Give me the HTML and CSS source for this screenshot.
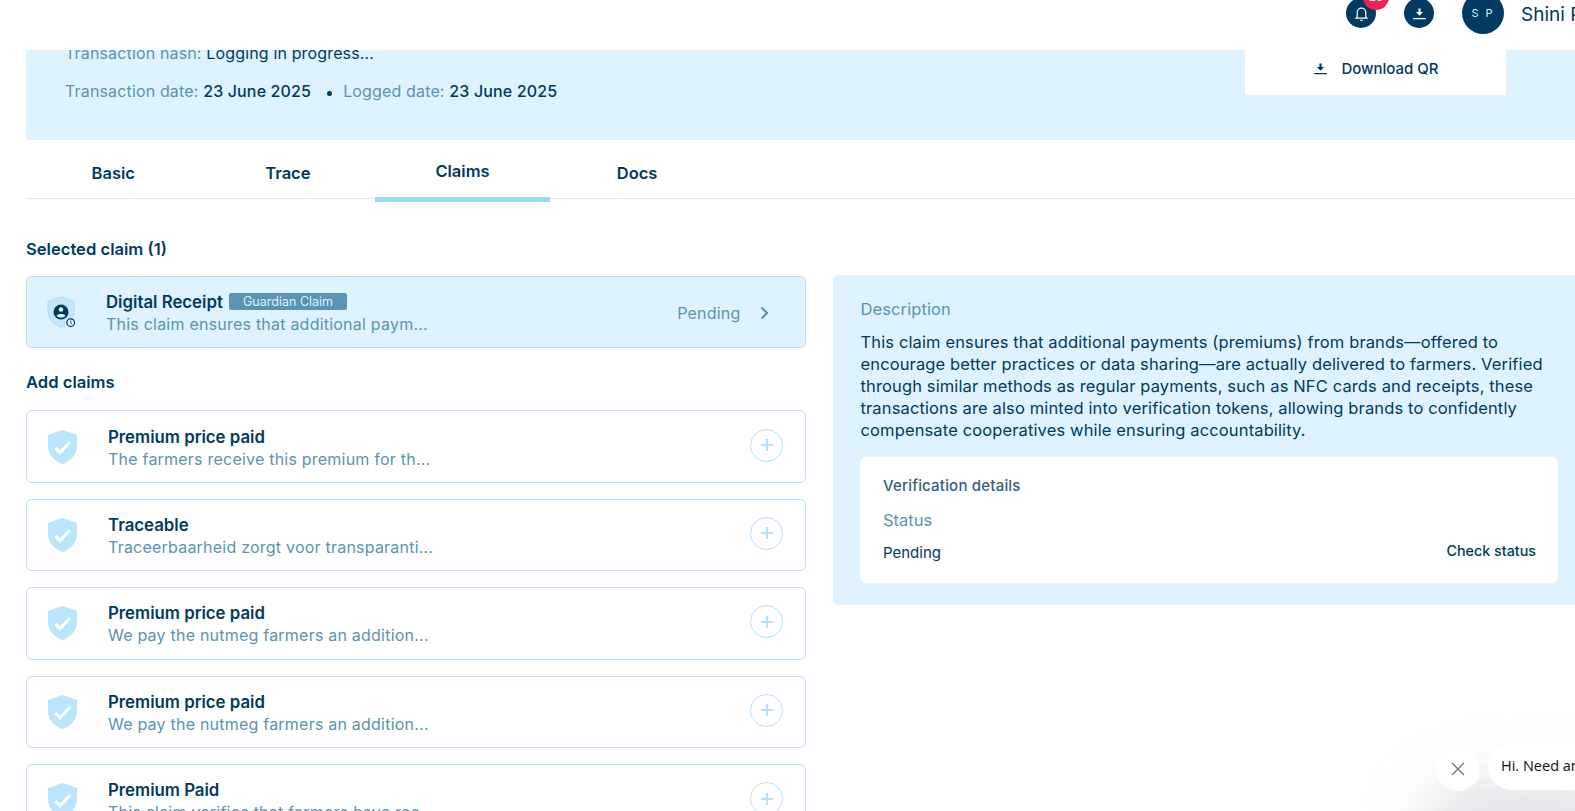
FILE: index.html
```html
<!DOCTYPE html>
<html lang="en">
  <head>
    <meta charset="UTF-8" />
    <meta name="viewport" content="width=device-width, initial-scale=1.0" />
    <title>Claims</title>
    <link rel="stylesheet" href="styles.css">
  </head>
  <body>
    <header class="topbar">
      <div class="round-btn">
        <svg viewBox="0 0 24 24" width="17" height="17" fill="none" stroke="#fff" stroke-width="1.700"><path d="M6 17V10.500a6 6 0 0 1 12 0V17l1.500 1.500h-15zM10 21.500h4"/></svg>
        <span class="badge">25</span>
      </div>
      <div class="round-btn">
        <svg viewBox="0 0 24 24" width="17" height="17" fill="#fff"><path d="M10.500 5h3v5H17l-5 5-5-5h3.500zM3 18.500h18V20H3z"/></svg>
      </div>
      <div class="avatar">S P</div>
      <div class="username">Shini Peters</div>
    </header>

    <main>
      <section class="summary">
        <div class="summary-text">
          <p><span class="muted">Transaction hash:</span> Logging in progress...</p>
          <p><span class="muted">Transaction date:</span> <b>23 June 2025</b><i class="dot"></i><span class="muted">Logged date:</span> <b>23 June 2025</b></p>
        </div>
        <div class="qr-box">
          <svg viewBox="0 0 24 24" width="17" height="17" fill="#003a61"><path d="M10.500 5h3v5H17l-5 5-5-5h3.500zM3 18.500h18V20H3z"/></svg>
          Download QR
        </div>
      </section>

      <nav class="tabs">
        <div class="tab">Basic</div>
        <div class="tab">Trace</div>
        <div class="tab active">Claims</div>
        <div class="tab">Docs</div>
      </nav>

      <h3 class="selected-title">Selected claim (1)</h3>

      <div class="columns">
        <div class="claims">
          <div class="claim selected">
            <svg class="shield" viewBox="0 0 34 36" width="34" height="36">
              <path d="M16 3l13 4.500v10c0 7.500-5.500 12.500-13 15.500C8.500 30 3 25 3 17.500v-10z" fill="#c4e7fc" stroke="#a9dcf9"/>
              <circle cx="16" cy="18" r="7.500" fill="#003a61"/>
              <circle cx="16" cy="15.500" r="2.300" fill="#dbf2ff"/>
              <path d="M11.500 22c1-2.600 8-2.600 9 0a7 7 0 0 1-9 0z" fill="#dbf2ff"/>
              <circle cx="25.700" cy="28.700" r="3.800" fill="#def3ff" stroke="#003a61" stroke-width="1.200"/>
              <path d="M25.700 26.500v2.200l1.500 1.200" fill="none" stroke="#003a61" stroke-width=".8"/>
            </svg>
            <div class="claim-text wide">
              <div class="claim-name">Digital Receipt <span class="tag">Guardian Claim</span></div>
              <div class="claim-desc">This claim ensures that additional paym...</div>
            </div>
            <span class="claim-status">Pending</span>
            <svg class="chevron" viewBox="0 0 12 16" width="12" height="16" fill="none" stroke="#5a93b3" stroke-width="2.200"><path d="M3.500 2.500L9 8l-5.500 5.500"/></svg>
          </div>

          <h3 class="add-title">Add claims</h3>

          <div class="claim">
            <svg class="shield" viewBox="0 0 34 36" width="34" height="36"><path d="M17.500 1l14.500 5v11c0 8.500-6 15-14.500 18C9 32 3 25.500 3 17V6z" fill="#bae5fc"/><path d="M10.500 19l4.500 4.500L25 13" fill="none" stroke="#fff" stroke-width="3.200"/></svg>
            <div class="claim-text">
              <div class="claim-name">Premium price paid</div>
              <div class="claim-desc">The farmers receive this premium for th...</div>
            </div>
            <span class="plus"></span>
          </div>
          <div class="claim">
            <svg class="shield" viewBox="0 0 34 36" width="34" height="36"><path d="M17.500 1l14.500 5v11c0 8.500-6 15-14.500 18C9 32 3 25.500 3 17V6z" fill="#bae5fc"/><path d="M10.500 19l4.500 4.500L25 13" fill="none" stroke="#fff" stroke-width="3.200"/></svg>
            <div class="claim-text">
              <div class="claim-name">Traceable</div>
              <div class="claim-desc">Traceerbaarheid zorgt voor transparanti...</div>
            </div>
            <span class="plus"></span>
          </div>
          <div class="claim">
            <svg class="shield" viewBox="0 0 34 36" width="34" height="36"><path d="M17.500 1l14.500 5v11c0 8.500-6 15-14.500 18C9 32 3 25.500 3 17V6z" fill="#bae5fc"/><path d="M10.500 19l4.500 4.500L25 13" fill="none" stroke="#fff" stroke-width="3.200"/></svg>
            <div class="claim-text">
              <div class="claim-name">Premium price paid</div>
              <div class="claim-desc">We pay the nutmeg farmers an addition...</div>
            </div>
            <span class="plus"></span>
          </div>
          <div class="claim">
            <svg class="shield" viewBox="0 0 34 36" width="34" height="36"><path d="M17.500 1l14.500 5v11c0 8.500-6 15-14.500 18C9 32 3 25.500 3 17V6z" fill="#bae5fc"/><path d="M10.500 19l4.500 4.500L25 13" fill="none" stroke="#fff" stroke-width="3.200"/></svg>
            <div class="claim-text">
              <div class="claim-name">Premium price paid</div>
              <div class="claim-desc">We pay the nutmeg farmers an addition...</div>
            </div>
            <span class="plus"></span>
          </div>
          <div class="claim">
            <svg class="shield" viewBox="0 0 34 36" width="34" height="36"><path d="M17.500 1l14.500 5v11c0 8.500-6 15-14.500 18C9 32 3 25.500 3 17V6z" fill="#bae5fc"/><path d="M10.500 19l4.500 4.500L25 13" fill="none" stroke="#fff" stroke-width="3.200"/></svg>
            <div class="claim-text">
              <div class="claim-name">Premium Paid</div>
              <div class="claim-desc">This claim verifies that farmers have rec...</div>
            </div>
            <span class="plus"></span>
          </div>
        </div>

        <aside class="detail">
          <div class="detail-label">Description</div>
          <p class="detail-text">This claim ensures that additional payments (premiums) from brands—offered to encourage better practices or data sharing—are actually delivered to farmers. Verified through similar methods as regular payments, such as NFC cards and receipts, these transactions are also minted into verification tokens, allowing brands to confidently compensate cooperatives while ensuring accountability.</p>
          <div class="verify">
            <div class="verify-title">Verification details</div>
            <div class="verify-label">Status</div>
            <div class="verify-row">
              <span>Pending</span>
              <span class="check">Check status</span>
            </div>
          </div>
        </aside>
      </div>
    </main>

    <div class="chat">
      <div class="chat-close">
        <svg viewBox="0 0 16 16" width="16" height="16" fill="none" stroke="#6b6f73" stroke-width="1.200"><path d="M2 2l12 12M14 2L2 14"/></svg>
      </div>
      <div class="chat-bubble">Hi. Need any help?</div>
    </div>
  </body>
</html>
```

FILE: styles.css
```css
html, body {
  height: 100%;
  overflow: hidden;
}

body {
  margin: 0;
  background: #fff;
  color: #003a61;
  font-family: Inter, "Noto Sans", sans-serif;
  font-size: 16px;
}

p, h3 {
  margin: 0;
}

.topbar {
  position: fixed;
  top: 0;
  left: 0;
  right: 0;
  height: 50px;
  z-index: 5;
  display: flex;
  align-items: flex-start;
  padding-left: 1346px;
  background: #fff;
}

.round-btn {
  position: relative;
  display: flex;
  justify-content: center;
  align-items: center;
  flex: none;
  width: 30px;
  height: 30px;
  margin: -2px 28px 0 0;
  border-radius: 50%;
  background: #003a61;
}

.badge {
  position: absolute;
  top: -14px;
  left: 17px;
  width: 26px;
  height: 26px;
  border-radius: 50%;
  background: #f0224f;
  color: #fff;
  font-size: 12px;
  line-height: 26px;
  text-align: center;
}

.avatar {
  display: flex;
  justify-content: center;
  align-items: center;
  flex: none;
  width: 42px;
  height: 42px;
  margin: -8px 17px 0 0;
  border-radius: 50%;
  background: #003a61;
  color: #dbf2ff;
  font-size: 11px;
  letter-spacing: 2px;
}

.username {
  flex: none;
  font-size: 19px;
  line-height: 29px;
}

.summary {
  display: flex;
  justify-content: space-between;
  height: 140px;
  margin-left: 26px;
  margin-right: -20px;
  padding-left: 39px;
  box-sizing: border-box;
  border-radius: 0 0 0 4px;
  background: #def3ff;
}

.summary-text {
  padding-top: 43px;
  font-size: 16px;
  letter-spacing: .15px;
  line-height: 20px;
}

.summary-text p {
  margin-bottom: 18px;
}

.muted {
  color: #5a93b3;
}

.summary-text b {
  font-weight: 500;
}

.dot {
  display: inline-block;
  width: 5px;
  height: 5px;
  margin: 0 11px 1px 16px;
  border-radius: 50%;
  background: #003a61;
}

.qr-box {
  display: flex;
  justify-content: center;
  align-items: center;
  gap: 12px;
  width: 261px;
  height: 95px;
  margin-right: 89px;
  padding-top: 41px;
  box-sizing: border-box;
  background: #fff;
  font-size: 15px;
  font-weight: 500;
}

.tabs {
  display: flex;
  height: 59px;
  margin-left: 26px;
  box-sizing: border-box;
  border-bottom: 1px solid #e3e9ee;
}

.tab {
  width: 174.600px;
  height: 58px;
  line-height: 66px;
  text-align: center;
  font-size: 16.500px;
  font-weight: 600;
}

.tab.active {
  height: 62px;
  line-height: 62px;
  box-sizing: border-box;
  border-bottom: 5px solid #92dcf6;
}

.selected-title {
  margin: 40px 0 17px 26px;
  font-size: 16.600px;
  font-weight: 600;
  line-height: 20px;
}

.columns {
  display: flex;
  align-items: flex-start;
  gap: 27px;
  margin-left: 26px;
  margin-right: -10px;
}

.claims {
  flex: none;
  width: 780px;
}

.claim {
  display: flex;
  align-items: center;
  height: 72.400px;
  margin-bottom: 16px;
  padding: 0 22px 0 18px;
  box-sizing: border-box;
  border: 1px solid #b5e1fa;
  border-radius: 6px;
  background: #fff;
}

.claim.selected {
  margin-bottom: 0;
  padding-right: 35px;
  background: #def3ff;
}

.shield {
  flex: none;
}

.claim-text {
  flex: 1;
  margin-left: 29px;
  padding-top: 2px;
  min-width: 0;
}

.claim-text.wide {
  margin-left: 27px;
}

.claim-name {
  font-size: 16.800px;
  font-weight: 600;
  line-height: 22px;
}

.claim-desc {
  color: #5a93b3;
  font-size: 16px;
  letter-spacing: .22px;
  line-height: 22px;
}

.tag {
  display: inline-block;
  margin-left: 2px;
  padding: 0 14px;
  border-radius: 2px;
  background: #5a93b3;
  color: #dbf2ff;
  font-size: 12.500px;
  font-weight: 400;
  line-height: 17px;
  vertical-align: 2px;
}

.claim-status {
  margin-right: 17.500px;
  padding-top: 2px;
  color: #5a93b3;
  font-size: 16px;
  letter-spacing: .2px;
}

.chevron {
  margin-top: 2px;
}

.plus {
  position: relative;
  flex: none;
  width: 31px;
  height: 31px;
  margin-top: -3px;
  border: 1px solid #b5e1fa;
  border-radius: 50%;
}

.plus::before, .plus::after {
  content: "";
  position: absolute;
  background: #b5e1fa;
}

.plus::before {
  top: 14.500px;
  left: 9.500px;
  width: 12px;
  height: 2px;
}

.plus::after {
  top: 9.500px;
  left: 14.500px;
  width: 2px;
  height: 12px;
}

.add-title {
  margin: 24px 0 18px;
  font-size: 16.600px;
  font-weight: 600;
  line-height: 20px;
}

.detail {
  flex: 1;
  height: 330px;
  margin-top: -1px;
  padding: 23px 27px 0 27.500px;
  box-sizing: border-box;
  border-radius: 6px 0 0 6px;
  background: #def3ff;
}

.detail-label {
  color: #5a93b3;
  font-size: 16.500px;
  letter-spacing: .1px;
  line-height: 22px;
}

.detail-text {
  margin-top: 11px;
  font-size: 16.500px;
  letter-spacing: .13px;
  line-height: 22px;
}

.verify {
  height: 126px;
  margin: 16px 0 0 -.5px;
  padding: 17px 22px 17px 23px;
  box-sizing: border-box;
  border-radius: 6px;
  background: #fff;
}

.verify-title {
  padding-top: 1px;
  color: #2f5f80;
  font-size: 15px;
  font-weight: 500;
  letter-spacing: .2px;
  line-height: 22px;
}

.verify-label {
  margin-top: 12px;
  color: #5a93b3;
  font-size: 16.500px;
  line-height: 22px;
}

.verify-row {
  display: flex;
  justify-content: space-between;
  margin-top: 11px;
  font-size: 15px;
  line-height: 22px;
}

.check {
  margin-top: -2px;
  font-size: 14.300px;
  font-weight: 500;
}

.chat {
  position: fixed;
  top: 0;
  left: 0;
  right: 0;
  bottom: 0;
  pointer-events: none;
}

.chat::before {
  content: "";
  position: absolute;
  right: -60px;
  bottom: -70px;
  width: 220px;
  height: 110px;
  border-radius: 50%;
  background: rgba(190, 200, 205, 0.45);
  filter: blur(26px);
}

.chat-close {
  position: absolute;
  left: 1436px;
  top: 747px;
  display: flex;
  justify-content: center;
  align-items: center;
  width: 44px;
  height: 44px;
  border-radius: 50%;
  background: #fff;
}

.chat-bubble {
  position: absolute;
  left: 1488px;
  top: 743px;
  width: 200px;
  height: 47px;
  padding: 0 13px;
  box-sizing: border-box;
  border-radius: 24px 24px 0 24px;
  background: #fff;
  color: #111;
  font-family: "Open Sans", sans-serif;
  font-size: 14.500px;
  line-height: 46px;
}
```
